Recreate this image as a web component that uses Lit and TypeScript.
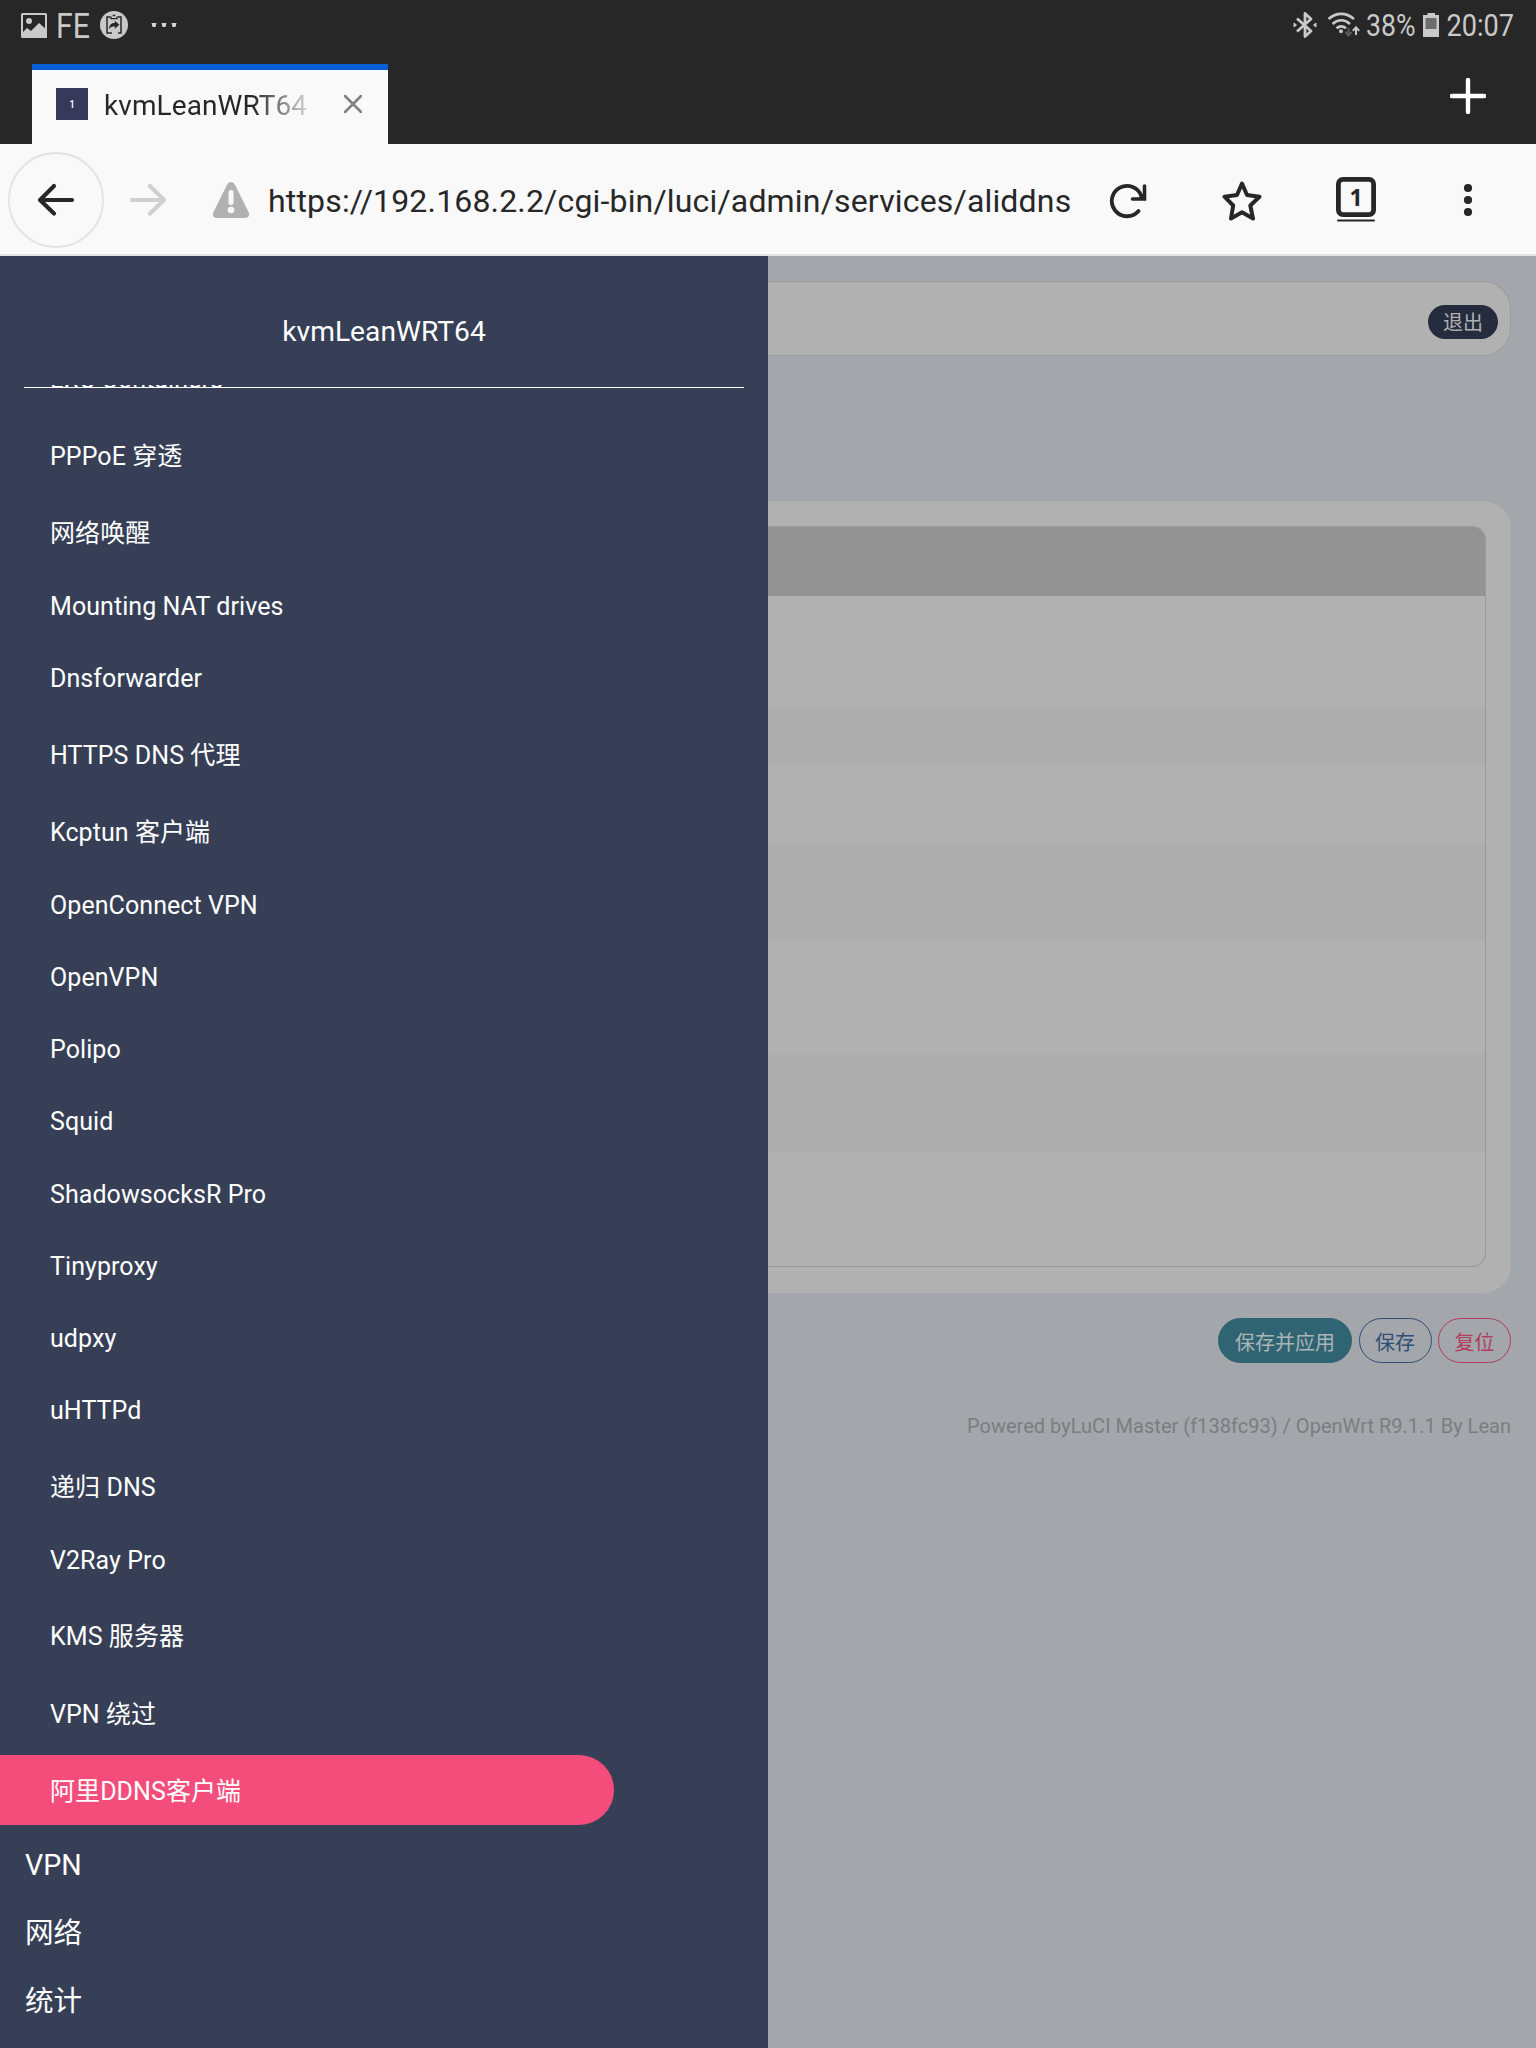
import { LitElement, html, css } from "lit";
import { customElement } from "lit/decorators.js";
import { classMap } from "lit/directives/class-map.js";

const SERVICES = [
  "LXC Containers",
  "PPPoE 穿透",
  "网络唤醒",
  "Mounting NAT drives",
  "Dnsforwarder",
  "HTTPS DNS 代理",
  "Kcptun 客户端",
  "OpenConnect VPN",
  "OpenVPN",
  "Polipo",
  "Squid",
  "ShadowsocksR Pro",
  "Tinyproxy",
  "udpxy",
  "uHTTPd",
  "递归 DNS",
  "V2Ray Pro",
  "KMS 服务器",
  "VPN 绕过",
  "阿里DDNS客户端",
];
const ACTIVE = "阿里DDNS客户端";
const SECTIONS = ["VPN", "网络", "统计"];
const ROW_HEIGHTS = [111, 58, 78, 97, 114, 97];

const hasHan = (s: string) => /[\u4e00-\u9fff]/.test(s);

@customElement("status-bar")
export class StatusBar extends LitElement {
  static styles = css`
    :host {
      display: flex;
      justify-content: space-between;
      height: 50px;
    }
    svg {
      display: block;
      font-family: Roboto, sans-serif;
    }
  `;

  render() {
    return html`
      <svg width="200" height="50" viewBox="0 0 200 50">
        <rect x="22" y="14" width="24" height="23" rx="0.5" fill="none" stroke="#c9c9c9" stroke-width="2" />
        <circle cx="29" cy="21" r="3" fill="#c9c9c9" />
        <path d="M22 33l5-5 4 3 8-8 8 7v8H22z" fill="#c9c9c9" />
        <text x="56" y="38" font-size="35" fill="#c9c9c9" textLength="34" lengthAdjust="spacingAndGlyphs">FE</text>
        <circle cx="114" cy="25" r="14" fill="#c9c9c9" />
        <path d="M110.500 17h-3.500v16h5M117.500 17h3.500v16h-3" fill="none" stroke="#272727" stroke-width="1.500" />
        <path d="M111 16.500v2.200h6v-2.200M112.700 15.500h2.600" fill="none" stroke="#272727" stroke-width="1.300" />
        <path d="M108.800 29c.6-4.400 2.800-6 6-6v-2.300l4.500 4-4.500 4v-2.500c-2.600 0-4.300.8-6 2.800z" fill="#272727" />
        <path d="M151.500 23h5l-1 4h-3z M161.500 23h5l-1 4h-3z M171.500 23h5l-1 4h-3z" fill="#d4d4d4" />
      </svg>
      <svg width="256" height="50" viewBox="1280 0 256 50">
        <path d="M1297 18.500l14 12.500-6 5.500v-23l6 5.500-14 12.500" fill="none" stroke="#c9c9c9" stroke-width="2.800" stroke-linejoin="round" />
        <path d="M1294 23l2.500 2-2.500 2zM1316 23l-2.500 2 2.500 2z" fill="#c9c9c9" stroke="#c9c9c9" />
        <g fill="none" stroke="#c9c9c9" stroke-width="2.600">
          <path d="M1328.500 19c8-6.800 17.500-6.800 25.500 0" />
          <path d="M1332.500 24c5.500-4.800 12-4.800 17.500 0" />
          <path d="M1336.500 28.300c3-2.500 6.500-2.500 9.500 0" />
        </g>
        <circle cx="1341" cy="31.200" r="2" fill="#c9c9c9" />
        <path d="M1348.500 28v7M1345.500 32l3 3.500 3-3.500" fill="none" stroke="#5c5c5c" stroke-width="2" />
        <path d="M1356 35v-7M1352.800 30.800l3.200-3.500 3.200 3.500" fill="none" stroke="#c9c9c9" stroke-width="2" />
        <text x="1366" y="36.300" font-size="31" fill="#c9c9c9" textLength="49.500" lengthAdjust="spacingAndGlyphs">38%</text>
        <path d="M1427.500 13h7.500v2h4v22h-16v-22h4.500z" fill="#c9c9c9" />
        <rect x="1425.500" y="18" width="11" height="11" fill="#6c6c6c" />
        <text x="1446.500" y="36.300" font-size="31" fill="#c9c9c9" textLength="67.500" lengthAdjust="spacingAndGlyphs">20:07</text>
      </svg>
    `;
  }
}

@customElement("tab-strip")
export class TabStrip extends LitElement {
  static styles = css`
    :host {
      display: flex;
      justify-content: space-between;
      height: 80px;
      margin-top: 14px;
      padding: 0 50px 0 32px;
    }
    .tab {
      box-sizing: border-box;
      display: flex;
      align-items: center;
      width: 356px;
      height: 80px;
      padding: 0 26px 0 24px;
      border-top: 6px solid #065fd4;
      background: #f9f9fa;
    }
    .favicon {
      display: grid;
      place-items: center;
      width: 32px;
      height: 32px;
      margin-bottom: 6px;
      background: #363959;
      color: #fff;
      font: 500 10px Roboto, sans-serif;
    }
    .title {
      width: 206px;
      margin: 0 0 3px 16px;
      overflow: hidden;
      white-space: nowrap;
      font: 28px/36px Roboto, sans-serif;
      letter-spacing: 0.08px;
      color: transparent;
      background: linear-gradient(to right, #272727 72%, #f0f0f0 103%);
      -webkit-background-clip: text;
      background-clip: text;
    }
    .close {
      margin: 0 0 6px auto;
    }
    .add {
      margin-top: 14px;
    }
  `;

  render() {
    return html`
      <div class="tab">
        <span class="favicon">1</span>
        <span class="title">kvmLeanWRT64</span>
        <svg class="close" width="18" height="18" viewBox="0 0 18 18">
          <path d="M1 1l16 16M17 1L1 17" stroke="#818181" stroke-width="2.600" stroke-linecap="round" />
        </svg>
      </div>
      <svg class="add" width="36" height="36" viewBox="0 0 36 36">
        <path d="M18 2v32M2 18h32" stroke="#fff" stroke-width="4.400" stroke-linecap="round" />
      </svg>
    `;
  }
}

@customElement("address-bar")
export class AddressBar extends LitElement {
  static styles = css`
    :host {
      box-sizing: border-box;
      display: flex;
      align-items: center;
      height: 112px;
      padding: 2px 62px 0 8px;
      background: #f9f9fa;
      border-bottom: 2px solid #e4e4e4;
    }
    svg {
      display: block;
      flex: none;
    }
    .forward {
      margin-left: 26px;
    }
    .warning {
      margin: 0 0 0 46px;
    }
    .url {
      flex: 1;
      margin: 2px 0 0 18px;
      white-space: nowrap;
      font: 32px/40px Roboto, sans-serif;
      letter-spacing: 0.17px;
      color: #272727;
    }
    .star {
      margin: 2px 0 0 75px;
    }
    .tabs {
      margin-left: 74px;
    }
    .menu {
      margin-left: 86px;
    }
    .count {
      font: 700 23px "Open Sans", sans-serif;
    }
  `;

  render() {
    return html`
      <svg width="96" height="96" viewBox="0 0 96 96">
        <circle cx="48" cy="48" r="47" fill="none" stroke="#e2e2e2" stroke-width="1.800" />
        <path d="M64 48H32M46 34L32 48l14 13.500" fill="none" stroke="#272727" stroke-width="4.200" stroke-linecap="round" stroke-linejoin="round" />
      </svg>
      <svg class="forward" width="36" height="34" viewBox="0 0 36 34">
        <path d="M2 17h32M20 3l14 14-14 13.500" fill="none" stroke="#d0d0d0" stroke-width="4.200" stroke-linecap="round" stroke-linejoin="round" />
      </svg>
      <svg class="warning" width="38" height="38" viewBox="0 0 38 38">
        <path d="M15.200 3.500c1.600-3.400 6-3.400 7.600 0L36.500 31c1.500 3.200 0 6-3.500 6H5c-3.500 0-5-2.800-3.500-6z" fill="#b1b1b1" />
        <rect x="16.500" y="9" width="5" height="15" rx="2.500" fill="#f9f9fa" />
        <circle cx="19" cy="29" r="3.300" fill="#f9f9fa" />
      </svg>
      <span class="url">https://192.168.2.2/cgi-bin/luci/admin/services/aliddns</span>
      <svg width="38" height="38" viewBox="0 0 38 38">
        <path d="M29.500 30A15.200 15.200 0 1 1 32.500 15.500" fill="none" stroke="#272727" stroke-width="3.800" stroke-linecap="round" />
        <path d="M35.500 5v13H23.500" fill="none" stroke="#272727" stroke-width="3.600" stroke-linecap="round" stroke-linejoin="miter" />
        <path d="M36 11v8h-9z" fill="#272727" />
      </svg>
      <svg class="star" width="40" height="40" viewBox="0 0 40 40">
        <path d="M20 2.500l5 11.500 12.500 1.700-9.200 8.800 2.700 13L20 31.300 9 37.500l2.200-13L2.500 15.700 15 14z" fill="none" stroke="#272727" stroke-width="4" stroke-linejoin="round" />
      </svg>
      <svg class="tabs" width="40" height="46" viewBox="0 0 40 46">
        <rect x="2.400" y="2.400" width="35.200" height="35.200" rx="4.500" fill="none" stroke="#272727" stroke-width="4.800" />
        <text class="count" x="20" y="28.500" text-anchor="middle" fill="#272727">1</text>
        <path d="M2 43.500h36" stroke="#272727" stroke-width="2" stroke-linecap="round" />
      </svg>
      <svg class="menu" width="12" height="34" viewBox="0 0 12 34">
        <g fill="#272727">
          <circle cx="6" cy="5" r="4.100" />
          <circle cx="6" cy="17" r="4.100" />
          <circle cx="6" cy="29" r="4.100" />
        </g>
      </svg>
    `;
  }
}

@customElement("side-menu")
export class SideMenu extends LitElement {
  static styles = css`
    :host {
      display: flex;
      flex-direction: column;
      flex: none;
      width: 768px;
      height: 1792px;
      overflow: hidden;
      background: #363f56;
      color: #fff;
      font-family: Roboto, "Noto Sans CJK SC", sans-serif;
    }
    .brand {
      box-sizing: border-box;
      flex: none;
      height: 129px;
      padding-top: 57px;
      text-align: center;
      font-size: 28.200px;
      line-height: 38px;
    }
    .scroll {
      display: flex;
      flex-direction: column;
      flex: 1;
      min-height: 0;
      overflow: hidden;
    }
    .rule {
      flex: none;
      height: 1px;
      margin: 2px 24px -3px;
      background: #fff;
    }
    .list {
      display: flex;
      flex-direction: column;
      margin: -41px 0 0;
      padding: 0;
      list-style: none;
    }
    .item {
      box-sizing: border-box;
      flex: none;
      display: flex;
      align-items: center;
      height: 72.200px;
      padding-left: 50px;
      font-size: 25px;
      line-height: 30px;
      letter-spacing: 0.07px;
      white-space: nowrap;
    }
    .item.han {
      height: 77.300px;
      padding-top: 4px;
    }
    .item.active {
      width: 614px;
      height: 70px;
      margin: 3.500px 0;
      border-radius: 0 35px 35px 0;
      background: #f44d7c;
    }
    .section {
      box-sizing: border-box;
      flex: none;
      display: flex;
      align-items: center;
      height: 68px;
      padding: 5px 0 0 25px;
      font-size: 28.600px;
      line-height: 38px;
    }
  `;

  render() {
    return html`
      <div class="brand">kvmLeanWRT64</div>
      <div class="rule"></div>
      <nav class="scroll">
        <ul class="list">
          ${SERVICES.map(
            (s) => html`<li class=${classMap({ item: true, han: hasHan(s), active: s === ACTIVE })}>${s}</li>`
          )}
          ${SECTIONS.map((s) => html`<li class="section">${s}</li>`)}
        </ul>
      </nav>
    `;
  }
}

@customElement("page-content")
export class PageContent extends LitElement {
  static styles = css`
    :host {
      box-sizing: border-box;
      display: flex;
      flex-direction: column;
      flex: 1;
      min-width: 0;
      padding: 25px 25px 0 0;
      background: #a3a7ac;
      font-family: Roboto, "Noto Sans CJK SC", sans-serif;
    }
    .topbar {
      box-sizing: border-box;
      flex: none;
      display: flex;
      justify-content: flex-end;
      align-items: center;
      height: 75px;
      padding: 7px 12px 0 0;
      border: 1.500px solid #999c9e;
      border-left: 0;
      border-radius: 0 28px 28px 0;
      background: #b1b1b1;
    }
    .logout {
      box-sizing: border-box;
      display: grid;
      place-items: center;
      width: 70px;
      height: 34px;
      padding-top: 1px;
      border-radius: 17px;
      background: #252c3d;
      color: #b1b1b1;
      font-size: 20px;
      line-height: 30px;
    }
    .card {
      box-sizing: border-box;
      flex: none;
      height: 792px;
      margin-top: 145px;
      padding: 25px 25px 25px 0;
      border-radius: 0 28px 28px 0;
      background: #b1b1b1;
    }
    .table {
      box-sizing: border-box;
      height: 741px;
      overflow: hidden;
      border: 1.500px solid #999;
      border-left: 0;
      border-radius: 0 14px 14px 0;
    }
    .head {
      height: 69px;
      background: #939393;
    }
    .row:nth-child(odd) {
      background: #adadad;
    }
    .actions {
      display: flex;
      justify-content: flex-end;
      gap: 6.500px;
      margin-top: 25px;
    }
    .btn {
      box-sizing: border-box;
      display: grid;
      place-items: center;
      width: 73px;
      height: 45px;
      padding-top: 5px;
      border: 1.500px solid;
      border-radius: 23px;
      font-size: 20px;
      line-height: 30px;
      white-space: nowrap;
    }
    .apply {
      width: 134px;
      border-color: #316472;
      background: #316472;
      color: #aab4b8;
    }
    .save {
      color: #2f4f74;
    }
    .reset {
      color: #b23c5e;
    }
    .footer {
      margin-top: 50px;
      text-align: right;
      font-size: 20px;
      line-height: 26px;
      letter-spacing: 0.020px;
      color: #7b7d80;
    }
  `;

  render() {
    return html`
      <div class="topbar"><span class="logout">退出</span></div>
      <div class="card">
        <div class="table">
          <div class="head"></div>
          ${ROW_HEIGHTS.map((h) => html`<div class="row" style="height:${h}px"></div>`)}
        </div>
      </div>
      <div class="actions">
        <span class="btn apply">保存并应用</span>
        <span class="btn save">保存</span>
        <span class="btn reset">复位</span>
      </div>
      <div class="footer">Powered byLuCI Master (f138fc93) / OpenWrt R9.1.1 By Lean</div>
    `;
  }
}

@customElement("app-root")
export class AppRoot extends LitElement {
  static styles = css`
    :host {
      display: block;
      width: 1536px;
      height: 2048px;
      overflow: hidden;
      background: #272727;
    }
    .viewport {
      display: flex;
      height: 1792px;
    }
  `;

  render() {
    return html`
      <status-bar></status-bar>
      <tab-strip></tab-strip>
      <address-bar></address-bar>
      <div class="viewport">
        <side-menu></side-menu>
        <page-content></page-content>
      </div>
    `;
  }
}
